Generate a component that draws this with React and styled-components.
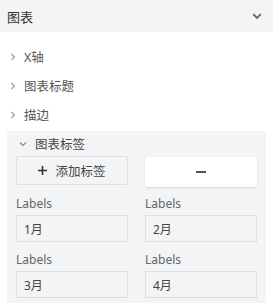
import styled, { createGlobalStyle } from "styled-components";

const GlobalStyle = createGlobalStyle`
  body {
    margin: 0;
    background: #fff;
    font-family: "Noto Sans", "Noto Sans CJK SC", sans-serif;
  }
`

const Sidebar = styled.div`
  width: 273px;
  height: 308px;
  background: #fff;
  overflow: hidden;
`

const Header = styled.div`
  display: flex;
  align-items: center;
  justify-content: space-between;
  height: 32px;
  padding: 0 11px 0 7px;
  background: #f3f4f6;
  color: #333;
  font-size: 13px;
`

const List = styled.div`
  padding-top: 10px;
`

const Item = styled.div`
  display: flex;
  align-items: center;
  gap: 7px;
  height: 29px;
  padding-left: 9px;
  color: #555;
  font-size: 12.5px;
`

const Panel = styled.div`
  margin: 2px 7px 0;
  padding: 0 9px 5px;
  background: #f3f4f6;
`

const PanelTitle = styled.div`
  display: flex;
  align-items: center;
  gap: 8px;
  height: 25px;
  padding-left: 3px;
  color: #444;
  font-size: 12.5px;
`

const Grid = styled.div`
  display: grid;
  grid-template-columns: 112px 112px;
  column-gap: 17px;
  row-gap: ${(p) => p.$rowGap || 0}px;
  margin-top: ${(p) => p.$top || 0}px;
`

const Button = styled.button`
  display: flex;
  align-items: center;
  justify-content: center;
  gap: 8px;
  height: ${(p) => (p.$primary ? 30 : 29)}px;
  margin-top: ${(p) => (p.$primary ? 1 : 0)}px;
  padding: 0;
  border: ${(p) => (p.$primary ? "none" : "1px solid #dcdfe4")};
  border-radius: 2px;
  background: ${(p) => (p.$primary ? "#fff" : "#f3f4f6")};
  box-shadow: ${(p) => (p.$primary ? "0 1px 2px rgba(0,0,0,0.12)" : "none")};
  color: #444;
  font-family: inherit;
  font-size: 12.5px;
`

const Field = styled.div`
  display: flex;
  flex-direction: column;
`

const Label = styled.div`
  height: 18px;
  line-height: 18px;
  color: #666;
  font-size: 12px;
  margin-bottom: 2px;
`

const Input = styled.div`
  display: flex;
  align-items: center;
  box-sizing: border-box;
  height: 27px;
  padding-left: 7px;
  border: 1px solid #dcdfe4;
  background: #f3f4f6;
  color: #444;
  font-size: 12px;
`

const Chevron = ({ dir = "right", size = 8, color = "#999", width = 1.1 }) => (
  <svg width={size} height={size} viewBox="0 0 8 8">
    {dir === "right" ? (
      <polyline points="2.5,1 5.5,4 2.5,7" fill="none" stroke={color} strokeWidth={width} />
    ) : (
      <polyline points="1,2.5 4,5.5 7,2.5" fill="none" stroke={color} strokeWidth={width} />
    )}
  </svg>
)

const items = ["X轴", "图表标题", "描边"]
const labels = ["1月", "2月", "3月", "4月"]

const App = () => {
  return (<>
    <GlobalStyle/>
    <Sidebar>
      <Header>
        <span>图表</span>
        <Chevron dir="down" size={10} color="#666" width={1.5}/>
      </Header>
      <List>
        {items.map((t) => (
          <Item key={t}>
            <Chevron/>
            {t}
          </Item>
        ))}
      </List>
      <Panel>
        <PanelTitle>
          <Chevron dir="down" color="#888"/>
          图表标签
        </PanelTitle>
        <Grid>
          <Button>
            <svg width="9" height="9" viewBox="0 0 9 9">
              <path d="M4.5 0V9M0 4.5H9" stroke="#333" strokeWidth="1.6"/>
            </svg>
            添加标签
          </Button>
          <Button $primary>
            <svg width="10" height="4" viewBox="0 0 10 4">
              <path d="M0 2H10" stroke="#555" strokeWidth="2"/>
            </svg>
          </Button>
        </Grid>
        <Grid $rowGap={9} $top={8}>
          {labels.map((v) => (
            <Field key={v}>
              <Label>Labels</Label>
              <Input>{v}</Input>
            </Field>
          ))}
        </Grid>
      </Panel>
    </Sidebar>
  </>);
}

export default App;
